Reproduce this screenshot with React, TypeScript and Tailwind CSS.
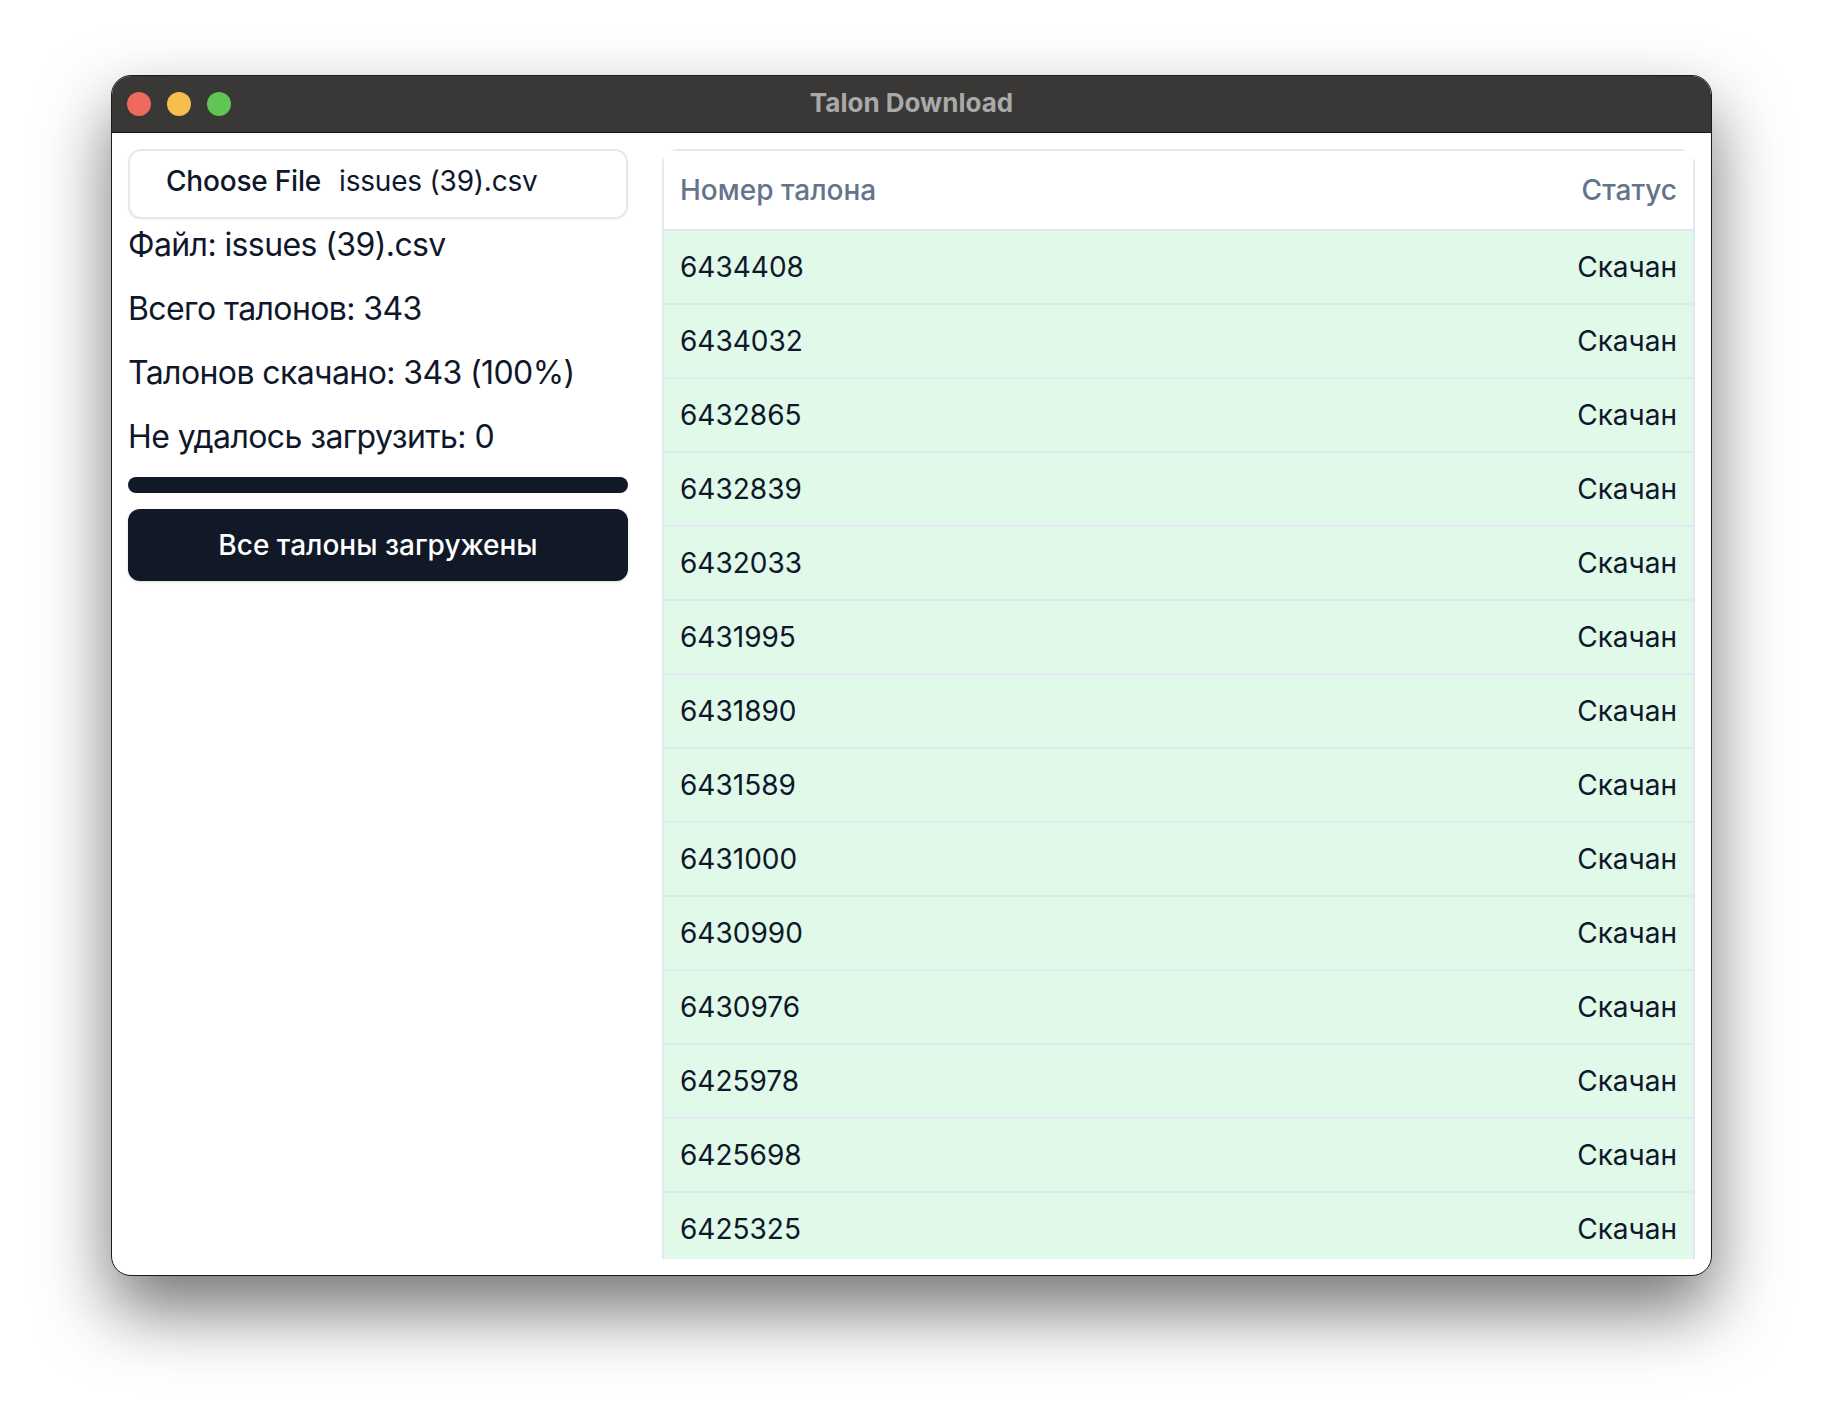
import React from "react";

const talons = [
  "6434408",
  "6434032",
  "6432865",
  "6432839",
  "6432033",
  "6431995",
  "6431890",
  "6431589",
  "6431000",
  "6430990",
  "6430976",
  "6425978",
  "6425698",
  "6425325",
  "6425101",
  "6424987",
];

const TrafficLights = () => (
  <div className="flex items-center gap-4 pl-[15px]">
    <span className="h-6 w-6 rounded-full bg-[#ee6a5f]" />
    <span className="h-6 w-6 rounded-full bg-[#f5bf4f]" />
    <span className="h-6 w-6 rounded-full bg-[#61c554]" />
  </div>
);

const Stats = () => (
  <div className="flex w-[500px] flex-col">
    {/* file picker */}
    <div className="flex h-[70px] items-center rounded-[13px] border-2 border-[#e2e8f0] bg-white pb-[7px] pl-[36px] text-[28px] tracking-[-0.2px] text-[#0f172a] shadow-[0_1px_2px_rgba(0,0,0,0.05)]">
      <span className="font-medium">Choose File</span>
      <span className="ml-[18px]">issues (39).csv</span>
    </div>

    <div className="mt-[2px] flex flex-col gap-4 text-[32px] leading-[48px] tracking-[-0.6px] text-[#0f172a]">
      <p>Файл: issues (39).csv</p>
      <p>Всего талонов: 343</p>
      <p>Талонов скачано: 343 (100%)</p>
      <p>Не удалось загрузить: 0</p>
    </div>

    <div className="mt-4 h-4 w-full overflow-hidden rounded-full bg-[#e2e8f0]">
      <div className="h-full bg-[#111827]" style={{ width: "100%" }} />
    </div>

    <button className="mt-4 h-[72px] w-full rounded-[12px] bg-[#111827] text-[28px] font-medium text-white shadow-[0_1px_3px_rgba(0,0,0,0.15)]">
      Все талоны загружены
    </button>
  </div>
);

const TalonTable = () => (
  <div className="min-h-0 flex-1 overflow-hidden">
    <div className="rounded-[16px] border-2 border-[#e2e8f0]">
      <div className="flex h-[80px] items-center justify-between border-b-2 border-[#e2e8f0] bg-white px-4 text-[28px] font-medium text-[#64748b]">
        <span>Номер талона</span>
        <span>Статус</span>
      </div>
      {talons.map((id) => (
        <div
          key={id}
          className="flex h-[74px] items-center justify-between border-b-2 border-[#e2e8f0] bg-[#e1f9e8] px-4 text-[28px] leading-[40px] text-[#0f172a]"
        >
          <span>{id}</span>
          <span>Скачан</span>
        </div>
      ))}
    </div>
  </div>
);

export default function App() {
  return (
    <div
      className="min-h-screen bg-white pl-[111px] pt-[75px]"
      style={{ fontFamily: "Inter, 'Noto Sans', sans-serif" }}
    >
      <div className="flex h-[1201px] w-[1601px] flex-col overflow-hidden rounded-[20px] border border-[#1c1c1c] bg-white shadow-[0_34px_70px_rgba(0,0,0,0.55)]">
        <div className="grid h-[57px] shrink-0 grid-cols-[1fr_auto_1fr] items-center border-b border-[#161616] bg-[#393836]">
          <TrafficLights />
          <span className="pb-[3px] text-[26px] font-bold text-[#a9a9a9]">Talon Download</span>
          <span />
        </div>

        <div className="flex min-h-0 flex-1 gap-[34px] p-4">
          <Stats />
          <TalonTable />
        </div>
      </div>
    </div>
  );
}
